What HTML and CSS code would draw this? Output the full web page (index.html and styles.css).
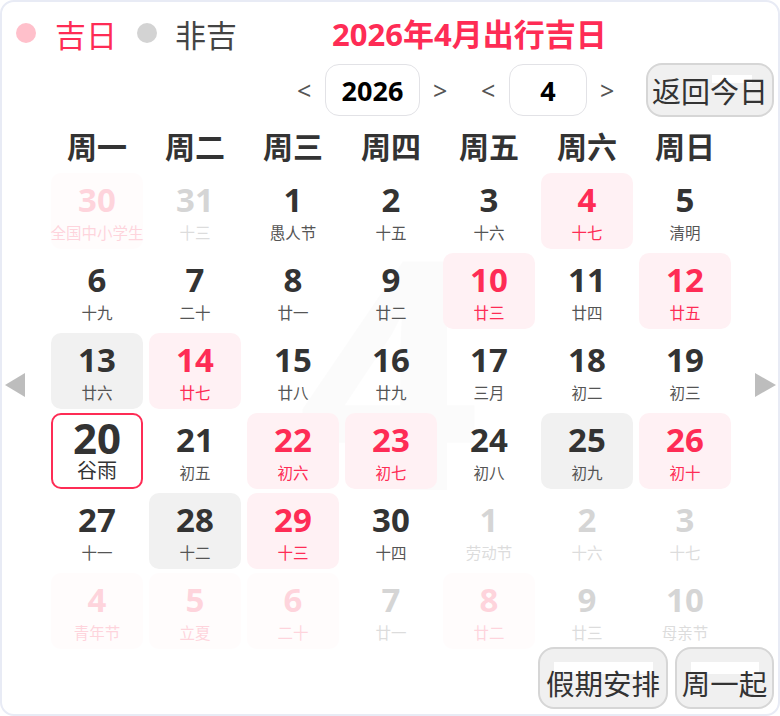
FILE: index.html
```html
<!DOCTYPE html>
<html lang="zh-CN">
<head>
<meta charset="utf-8">
<title>2026年4月出行吉日</title>
<link rel="stylesheet" href="styles.css">
</head>
<body>
<div class="card">
  <div class="top">
    <div class="legend">
      <span class="dot dot-pink"></span><span class="lg lg-red">吉日</span>
      <span class="dot dot-gray"></span><span class="lg lg-gray">非吉</span>
    </div>
    <div class="title">2026年4月出行吉日</div>
  </div>
  <div class="controls">
    <span class="nav">&lt;</span>
    <span class="box box-year">2026</span>
    <span class="nav">&gt;</span>
    <span class="nav nav-gap">&lt;</span>
    <span class="box box-month">4</span>
    <span class="nav">&gt;</span>
    <span class="btn btn-today"><span class="btn-txt">返回今日</span></span>
  </div>
  <div class="weekdays">
    <span>周一</span><span>周二</span><span>周三</span><span>周四</span><span>周五</span><span>周六</span><span>周日</span>
  </div>
  <div class="body">
    <div class="side side-left"><span class="tri tri-left"></span></div>
    <div class="grid">
      <div class="watermark">4</div>
      <div class="cell red other"><span class="num">30</span><span class="lunar">全国中小学生</span></div>
      <div class="cell other"><span class="num">31</span><span class="lunar">十三</span></div>
      <div class="cell"><span class="num">1</span><span class="lunar">愚人节</span></div>
      <div class="cell"><span class="num">2</span><span class="lunar">十五</span></div>
      <div class="cell"><span class="num">3</span><span class="lunar">十六</span></div>
      <div class="cell red"><span class="num">4</span><span class="lunar">十七</span></div>
      <div class="cell"><span class="num">5</span><span class="lunar">清明</span></div>

      <div class="cell"><span class="num">6</span><span class="lunar">十九</span></div>
      <div class="cell"><span class="num">7</span><span class="lunar">二十</span></div>
      <div class="cell"><span class="num">8</span><span class="lunar">廿一</span></div>
      <div class="cell"><span class="num">9</span><span class="lunar">廿二</span></div>
      <div class="cell red"><span class="num">10</span><span class="lunar">廿三</span></div>
      <div class="cell"><span class="num">11</span><span class="lunar">廿四</span></div>
      <div class="cell red"><span class="num">12</span><span class="lunar">廿五</span></div>

      <div class="cell gray"><span class="num">13</span><span class="lunar">廿六</span></div>
      <div class="cell red"><span class="num">14</span><span class="lunar">廿七</span></div>
      <div class="cell"><span class="num">15</span><span class="lunar">廿八</span></div>
      <div class="cell"><span class="num">16</span><span class="lunar">廿九</span></div>
      <div class="cell"><span class="num">17</span><span class="lunar">三月</span></div>
      <div class="cell"><span class="num">18</span><span class="lunar">初二</span></div>
      <div class="cell"><span class="num">19</span><span class="lunar">初三</span></div>

      <div class="cell today"><span class="num">20</span><span class="lunar">谷雨</span></div>
      <div class="cell"><span class="num">21</span><span class="lunar">初五</span></div>
      <div class="cell red"><span class="num">22</span><span class="lunar">初六</span></div>
      <div class="cell red"><span class="num">23</span><span class="lunar">初七</span></div>
      <div class="cell"><span class="num">24</span><span class="lunar">初八</span></div>
      <div class="cell gray"><span class="num">25</span><span class="lunar">初九</span></div>
      <div class="cell red"><span class="num">26</span><span class="lunar">初十</span></div>

      <div class="cell"><span class="num">27</span><span class="lunar">十一</span></div>
      <div class="cell gray"><span class="num">28</span><span class="lunar">十二</span></div>
      <div class="cell red"><span class="num">29</span><span class="lunar">十三</span></div>
      <div class="cell"><span class="num">30</span><span class="lunar">十四</span></div>
      <div class="cell other"><span class="num">1</span><span class="lunar">劳动节</span></div>
      <div class="cell other"><span class="num">2</span><span class="lunar">十六</span></div>
      <div class="cell other"><span class="num">3</span><span class="lunar">十七</span></div>

      <div class="cell red other"><span class="num">4</span><span class="lunar">青年节</span></div>
      <div class="cell red other"><span class="num">5</span><span class="lunar">立夏</span></div>
      <div class="cell red other"><span class="num">6</span><span class="lunar">二十</span></div>
      <div class="cell other"><span class="num">7</span><span class="lunar">廿一</span></div>
      <div class="cell red other"><span class="num">8</span><span class="lunar">廿二</span></div>
      <div class="cell other"><span class="num">9</span><span class="lunar">廿三</span></div>
      <div class="cell other"><span class="num">10</span><span class="lunar">母亲节</span></div>
    </div>
    <div class="side side-right"><span class="tri tri-right"></span></div>
  </div>
  <div class="footer">
    <span class="btn btn-holiday"><span class="btn-txt">假期安排</span></span>
    <span class="btn btn-week"><span class="btn-txt">周一起</span></span>
  </div>
</div>
</body>
</html>
```

FILE: styles.css
```css
* { box-sizing: border-box; }
html, body { margin: 0; padding: 0; background: #fff; }
body {
  font-family: "Noto Sans", "Noto Sans CJK SC", sans-serif;
  color: #333;
}
.card {
  width: 780px;
  height: 716px;
  border: 2px solid #e8ebf5;
  border-radius: 14px;
  background: #fff;
  overflow: hidden;
}

/* top row */
.top {
  display: flex;
  align-items: center;
  height: 61px;
  padding: 3px 0 0 14px;
}
.legend {
  display: flex;
  align-items: center;
}
.dot {
  width: 20px;
  height: 20px;
  border-radius: 50%;
  margin-bottom: 3px;
}
.dot-pink { background: #ffc0cb; }
.dot-gray { background: #d3d3d3; margin-left: 20px; }
.lg {
  font-family: "Noto Sans CJK SC", sans-serif;
  font-size: 31px;
  line-height: 58px;
}
.lg-red { color: #fe2c55; margin-left: 19px; }
.lg-gray { color: #444; margin-left: 18px; }
.title {
  margin-left: 95px;
  font-family: "Noto Sans", "Noto Sans CJK SC", sans-serif;
  font-weight: 700;
  font-size: 31px;
  line-height: 58px;
  color: #fe2c55;
}

/* controls */
.controls {
  display: flex;
  align-items: center;
  justify-content: flex-end;
  height: 54px;
  padding-right: 4px;
}
.nav {
  width: 14px;
  text-align: center;
  font-size: 25px;
  color: #555;
  line-height: 30px;
}
.box {
  display: flex;
  align-items: center;
  justify-content: center;
  height: 52px;
  border: 1.5px solid #e2e2e6;
  border-radius: 14px;
  font-weight: 700;
  font-size: 27px;
  color: #000;
  margin: 0 13px 0 14px;
}
.box-year { width: 95px; }
.box-month { width: 78px; }
.nav-gap { margin-left: 34px; }
.btn {
  position: relative;
  display: flex;
  align-items: center;
  justify-content: center;
  background: #f0f0f0;
  border: 2px solid #d6d6d6;
  border-radius: 16px;
  font-family: "Noto Sans CJK SC", sans-serif;
  color: #333;
}
.btn-txt { position: relative; }
.btn-today {
  width: 128px;
  height: 54px;
  margin-left: 32px;
  font-size: 29px;
}
.btn-today::before {
  content: "";
  position: absolute;
  left: 64px;
  top: 10px;
  width: 40px;
  height: 8px;
  background: #fff;
}

/* weekday header */
.weekdays {
  display: grid;
  grid-template-columns: repeat(7, 92px);
  column-gap: 6px;
  margin-left: 49px;
  height: 56px;
  font-family: "Noto Sans CJK SC", sans-serif;
  font-weight: 700;
  font-size: 30px;
  line-height: 56px;
  text-align: center;
  color: #333;
}

/* body */
.body {
  display: flex;
}
.side {
  display: flex;
  flex-direction: column;
}
.side-left { width: 49px; padding-left: 3px; }
.side-right { width: 47px; padding-left: 24px; }
.tri {
  margin-top: 200px;
  width: 0;
  height: 0;
  border-top: 12px solid transparent;
  border-bottom: 12px solid transparent;
}
.tri-left { border-right: 20px solid #bdbdbd; }
.tri-right { border-left: 21px solid #bdbdbd; }

.grid {
  position: relative;
  display: grid;
  grid-template-columns: repeat(7, 92px);
  grid-auto-rows: 76px;
  column-gap: 6px;
  row-gap: 4px;
}
.watermark {
  position: absolute;
  left: 246px;
  top: 33px;
  font-family: "Noto Sans", sans-serif;
  font-weight: 700;
  font-size: 320px;
  line-height: 320px;
  color: rgba(0, 0, 0, 0.016);
  pointer-events: none;
}
.cell {
  position: relative;
  display: flex;
  flex-direction: column;
  align-items: center;
  padding-top: 7px;
  border: 2px solid transparent;
  border-radius: 10px;
}
.num {
  font-family: "Noto Sans", sans-serif;
  font-weight: 700;
  font-size: 33px;
  line-height: 36px;
  color: #333;
}
.lunar {
  font-family: "Noto Sans CJK SC", sans-serif;
  font-size: 15.5px;
  line-height: 28px;
  color: #555;
  white-space: nowrap;
}
.cell.red { background: #fff1f4; }
.cell.red .num, .cell.red .lunar { color: #fe2c55; }
.cell.gray { background: #f1f1f1; }
.cell.other { opacity: 0.2; }
.cell.today {
  background: #fff;
  border-color: #fe2c55;
}
.cell.today .num { font-size: 42px; line-height: 31px; }
.cell.today .lunar { font-size: 20px; line-height: 33px; color: #333; }

/* footer */
.footer {
  display: flex;
  justify-content: flex-end;
  gap: 7px;
  margin-top: -2px;
  padding-right: 4px;
}
.footer .btn {
  height: 62px;
  font-size: 28.5px;
  padding-top: 8px;
}
.footer .btn::before {
  content: "";
  position: absolute;
  top: 13px;
  height: 12px;
  background: #fff;
}
.btn-holiday { width: 130px; }
.btn-holiday::before { left: 14px; right: 13px; }
.btn-week { width: 99px; }
.btn-week::before { left: 14px; right: 13px; }
```
